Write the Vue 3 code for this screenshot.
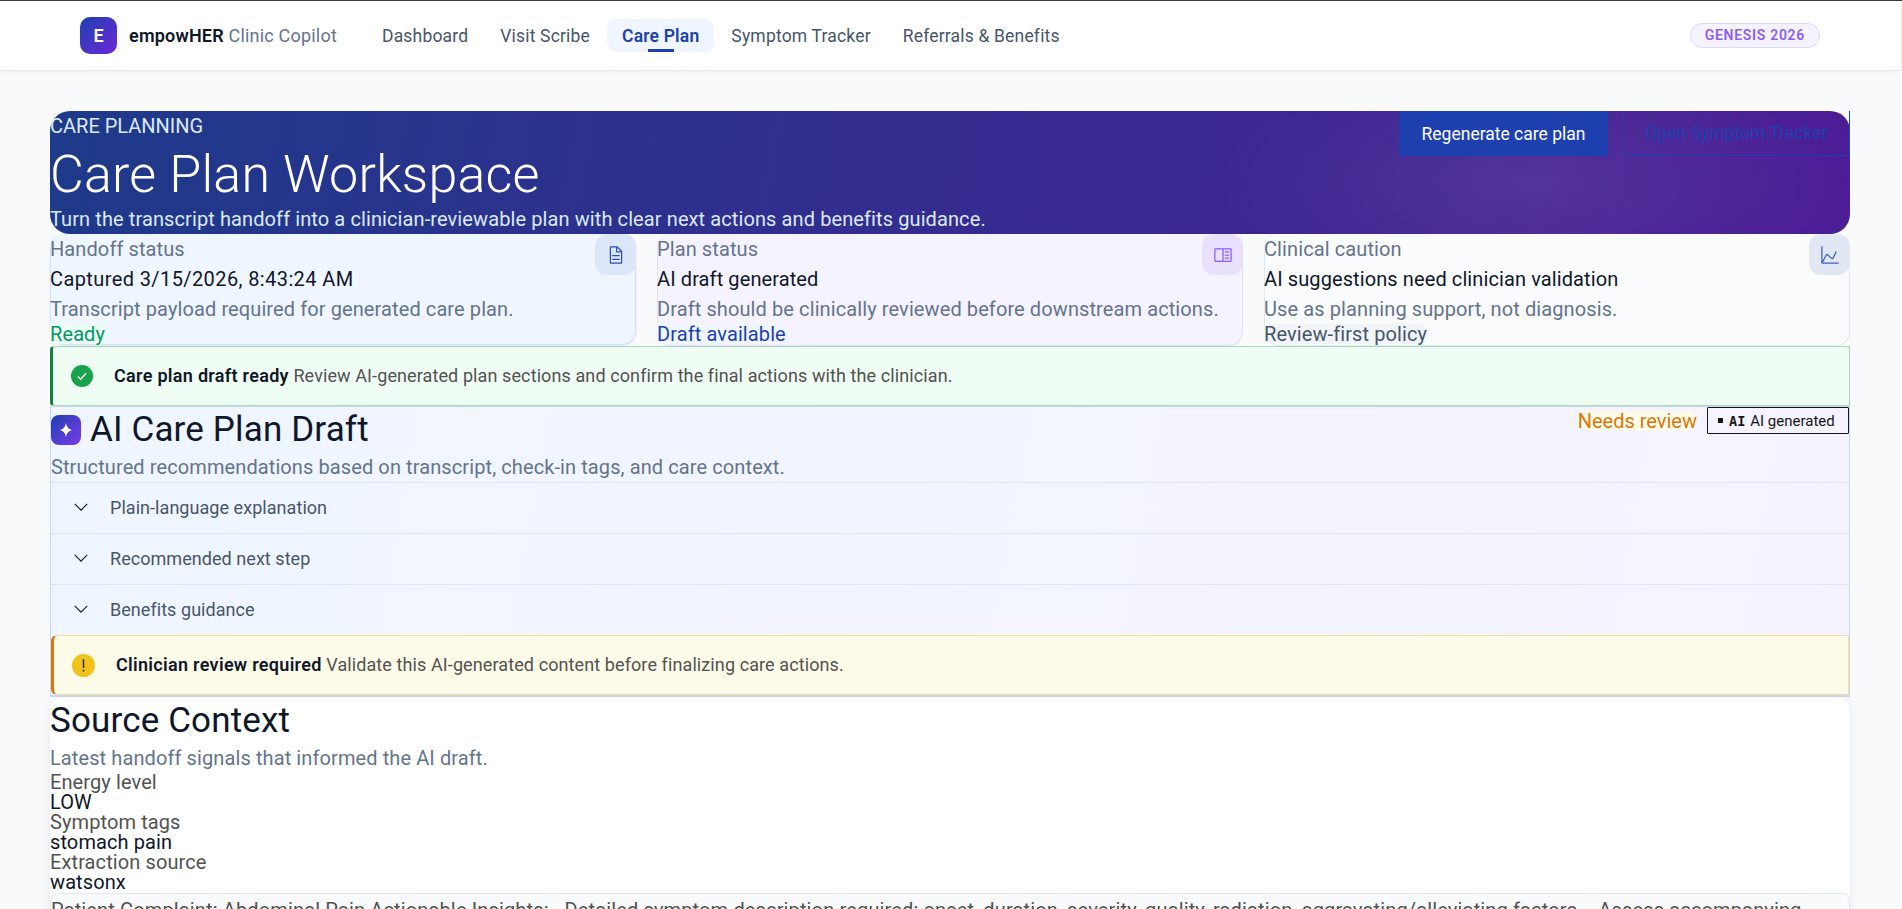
<script setup>
const navItems = [
  { label: 'Dashboard', active: false },
  { label: 'Visit Scribe', active: false },
  { label: 'Care Plan', active: true },
  { label: 'Symptom Tracker', active: false },
  { label: 'Referrals & Benefits', active: false },
]
const sections = ['Plain-language explanation', 'Recommended next step', 'Benefits guidance']
const signals = [
  { k: 'Energy level', v: 'LOW' },
  { k: 'Symptom tags', v: 'stomach pain' },
  { k: 'Extraction source', v: 'watsonx' },
]
</script>

<template>
  <div class="app">
    <header class="topbar">
      <div class="brand">
        <span class="logo">E</span>
        <span class="brand-text"><b>empowHER</b> <span>Clinic Copilot</span></span>
      </div>
      <nav class="nav">
        <a v-for="n in navItems" :key="n.label" class="nav-item" :class="{ active: n.active }">{{ n.label }}</a>
      </nav>
      <span class="genesis">GENESIS 2026</span>
    </header>

    <main class="main">
      <section class="hero">
        <div class="hero-copy">
          <div class="eyebrow">CARE PLANNING</div>
          <h1>Care Plan Workspace</h1>
          <p>Turn the transcript handoff into a clinician-reviewable plan with clear next actions and benefits guidance.</p>
        </div>
        <div class="hero-actions">
          <button class="btn-primary">Regenerate care plan</button>
          <button class="btn-ghost">Open Symptom Tracker</button>
        </div>
      </section>

      <section class="cards">
        <article class="card blue">
          <span class="tile tile-blue">
            <svg viewBox="0 0 32 32" width="20" height="20" fill="#2f4fb5"><path d="M25.7 9.3l-7-7C18.500 2.100 18.300 2 18 2H8C6.900 2 6 2.900 6 4v24c0 1.100.9 2 2 2h16c1.100 0 2-.9 2-2V10C26 9.700 25.900 9.500 25.700 9.300zM18 4.400l5.600 5.600H18V4.400zM24 28H8V4h8v6c0 1.100.9 2 2 2h6V28z"/><path d="M10 22h12v2H10zM10 16h12v2H10z"/></svg>
          </span>
          <div class="c-label">Handoff status</div>
          <div class="c-value wide">Captured 3/15/2026, 8:43:24 AM</div>
          <div class="c-note">Transcript payload required for generated care plan.</div>
          <div class="c-tag green">Ready</div>
        </article>
        <article class="card violet">
          <span class="tile tile-violet">
            <svg viewBox="0 0 32 32" width="20" height="20" fill="#8b5cf6"><path d="M19 10h7v2h-7zM19 15h7v2h-7zM19 20h7v2h-7z"/><path d="M28 5H4C2.897 5 2 5.897 2 7v18c0 1.103.897 2 2 2h24c1.103 0 2-.897 2-2V7c0-1.103-.897-2-2-2zM4 7h11v18H4zM17 25V7h11l.002 18z"/></svg>
          </span>
          <div class="c-label">Plan status</div>
          <div class="c-value">AI draft generated</div>
          <div class="c-note">Draft should be clinically reviewed before downstream actions.</div>
          <div class="c-tag navy">Draft available</div>
        </article>
        <article class="card gray">
          <span class="tile tile-gray">
            <svg viewBox="0 0 32 32" width="20" height="20" fill="#3f5fbf"><path d="M4.670 28l6.390-12 7.300 6.490a2 2 0 0 0 1.700.47 2 2 0 0 0 1.420-1.070L27 10.900l-1.820-.9L19.690 21l-7.300-6.490A2 2 0 0 0 10.710 14a2 2 0 0 0-1.420 1L4 25V2H2v26a2 2 0 0 0 2 2h26v-2z"/></svg>
          </span>
          <div class="c-label">Clinical caution</div>
          <div class="c-value">AI suggestions need clinician validation</div>
          <div class="c-note">Use as planning support, not diagnosis.</div>
          <div class="c-tag slate">Review-first policy</div>
        </article>
      </section>

      <section class="alert success">
        <span class="alert-icon">
          <svg viewBox="0 0 22 22" width="22" height="22"><circle cx="11" cy="11" r="11" fill="#16a34a"/><path d="M6.800 11.400l2.900 2.800 5.400-6" fill="none" stroke="#fff" stroke-width="1.400"/></svg>
        </span>
        <p><b>Care plan draft ready</b> Review AI-generated plan sections and confirm the final actions with the clinician.</p>
      </section>

      <section class="draft">
        <div class="draft-head">
          <div class="draft-title">
            <span class="spark">
              <svg viewBox="0 0 16 16" width="18" height="18"><path d="M8 1.500c.6 4 2.400 5.900 6 6.500-3.600.6-5.400 2.500-6 6.500C7.400 10.500 5.600 8.600 2 8c3.600-.6 5.400-2.500 6-6.500z" fill="#fff"/></svg>
            </span>
            <h2>AI Care Plan Draft</h2>
          </div>
          <div class="draft-badges">
            <span class="needs">Needs review</span>
            <span class="ai-tag"><i></i><b>AI</b><span>AI generated</span></span>
          </div>
        </div>
        <p class="draft-sub">Structured recommendations based on transcript, check-in tags, and care context.</p>
        <div v-for="s in sections" :key="s" class="acc-row">
          <svg viewBox="0 0 16 16" width="20" height="20" fill="none" stroke="#161616" stroke-width=".9"><path d="M3 5.500l5 5 5-5"/></svg>
          <span>{{ s }}</span>
        </div>
        <div class="alert warn">
          <span class="alert-icon">
            <svg viewBox="0 0 22 22" width="23" height="23"><circle cx="11" cy="11" r="11" fill="#f1c21b"/><path d="M11 5v8.500M11 15v1.800" stroke="#161616" stroke-width="1.300" fill="none"/></svg>
          </span>
          <p><b>Clinician review required</b> Validate this AI-generated content before finalizing care actions.</p>
        </div>
      </section>

      <section class="source">
        <h2>Source Context</h2>
        <p class="source-sub">Latest handoff signals that informed the AI draft.</p>
        <div class="signals">
          <div v-for="s in signals" :key="s.k" class="signal">
            <div class="s-k">{{ s.k }}</div>
            <div class="s-v">{{ s.v }}</div>
          </div>
        </div>
        <div class="transcript">Patient Complaint: Abdominal Pain Actionable Insights: - Detailed symptom description required: onset, duration, severity, quality, radiation, aggravating/alleviating factors. - Assess accompanying</div>
      </section>
    </main>
  </div>
</template>

<style>
html, body { overflow: hidden; background: #f8fafc; }
</style>

<style scoped>
.app { font-family: "Roboto", "Liberation Sans", sans-serif; color: #0f172a; background: #f8fafc; height: 909px; overflow: hidden; border-top: 1px solid #3a3a3a; box-sizing: border-box; }
.topbar { width: 1740px; height: 69px; background: #fff; border-bottom: 1px solid #e2e8f0; box-shadow: 0 1px 3px rgba(15,23,42,.05); display: flex; align-items: center; padding: 0 80px; box-sizing: content-box; }
.brand { display: flex; align-items: center; gap: 12px; width: 287px; flex: none; }
.logo { width: 37px; height: 37px; border-radius: 10px; background: linear-gradient(135deg, #1e40af, #6d28d9); color: #fff; font-weight: 600; font-size: 18px; display: flex; align-items: center; justify-content: center; }
.brand-text { font-size: 18px; letter-spacing: .2px; color: #64748b; white-space: nowrap; }
.brand-text b { color: #0f172a; font-weight: 600; }
.nav { display: flex; gap: 2px; flex: 1; }
.nav-item { position: relative; padding: 8px 15px 6px; line-height: 19px; font-size: 17.500px; letter-spacing: .18px; color: #475569; border-radius: 9px; white-space: nowrap; }
.nav-item.active { background: #eff6ff; color: #1e40af; font-weight: 600; }
.nav-item.active::after { content: ""; position: absolute; left: 50%; bottom: 0; width: 26px; height: 3px; margin-left: -13px; background: #1e40af; }
.genesis { font-size: 14px; font-weight: 600; letter-spacing: .7px; color: #8b5cf6; background: #f5f3ff; border: 1px solid #ddd6fe; border-radius: 13px; padding: 3px 14px; line-height: 17px; white-space: nowrap; }

.main { padding: 40px 52px 0 50px; }
.hero { height: 123px; border-radius: 20px; display: flex; justify-content: space-between; color: #fff; background: radial-gradient(ellipse 320px 130px at 82.500% 58%, rgba(255,255,255,.08), transparent), linear-gradient(100deg, #1e3a8a, #4c1d95); }
.eyebrow { font-size: 20px; line-height: 30px; color: #dbeafe; }
.hero h1 { margin: 1px 0 0; font-size: 52px; font-weight: 300; line-height: 65px; letter-spacing: .2px; white-space: nowrap; }
.hero p { margin: 0; font-size: 20px; line-height: 25px; letter-spacing: .1px; color: #dbeafe; white-space: nowrap; }
.hero-actions { display: flex; gap: 15px; align-items: flex-start; }
.btn-primary, .btn-ghost { height: 45px; font-family: inherit; font-size: 17.500px; padding: 0; border: 0; }
.btn-primary { background: #1e40af; color: #fff; width: 209px; }
.btn-ghost { background: transparent; color: #1e40af; border: 1px solid #1e40af; border-width: 0 1px 1px 1px; border-left-color: rgba(30,64,175,.4); width: 227px; box-sizing: border-box; }

.cards { display: grid; grid-template-columns: repeat(3, 1fr); gap: 21px; height: 112px; align-items: start; }
.card { position: relative; height: 112px; box-sizing: border-box; border: 1px solid #dbe4f5; border-top-width: 0; border-radius: 14px; font-size: 20px; letter-spacing: .1px; }
.card > div { margin-left: -1px; }
.blue { background: #eff6ff; border-color: #cfe0fc; box-shadow: 0 1px 3px rgba(15,23,42,.08); height: 111px; }
.violet { background: #f5f3ff; border-color: #e4defc; }
.gray { background: #fafbfd; border-color: #e2e8f0; }
.tile { position: absolute; top: 0; right: -1px; width: 41px; height: 41px; border-radius: 12px; display: flex; align-items: center; justify-content: center; }
.tile-blue { background: #dbe6f8; }
.tile-violet { background: #e8e0fd; }
.tile-gray { background: #e2e8f3; }
.c-label { color: #64748b; line-height: 30px; }
.c-value { color: #0f172a; line-height: 30px; }
.c-value.wide { letter-spacing: .4px; }
.c-note { color: #64748b; line-height: 30px; }
.c-tag { line-height: 20px; width: fit-content; }
.green { color: #059669; background: #ecfdf5; }
.navy { color: #1e40af; background: #eff6ff; }
.slate { color: #475569; background: #f1f5f9; border-radius: 8px; }

.alert { display: flex; align-items: center; gap: 21px; padding-left: 18px; border: 1px solid; border-left-width: 3px; box-sizing: border-box; font-size: 18px; letter-spacing: .1px; color: #525252; }
.alert p { margin: 0 0 1px; }
.alert b { color: #0f172a; font-weight: 600; letter-spacing: .3px; }
.alert-icon { display: flex; }
.success { height: 60px; background: #f0fdf4; border-color: #a7dcb6; border-left-color: #15803d; border-radius: 4px 0 0 4px; }
.warn { height: 60px; background: #fefbe8; border-color: #f4df9a; border-left-color: #d97706; border-radius: 6px 0 0 6px; }

.draft { background: linear-gradient(100deg, #eff6ff, #f5f3ff); border: 1px solid #c9d7fb; border-bottom-width: 2px; height: 291px; box-sizing: border-box; }
.draft-head { display: flex; justify-content: space-between; height: 45px; align-items: center; }
.draft-title { display: flex; align-items: center; gap: 9px; }
.spark { width: 30px; height: 30px; border-radius: 8px; background: linear-gradient(135deg, #1e40af, #7c3aed); display: flex; align-items: center; justify-content: center; }
.draft h2 { margin: 0; font-size: 35px; font-weight: 400; letter-spacing: .15px; color: #0f172a; white-space: nowrap; }
.draft-badges { display: flex; align-items: center; gap: 10px; align-self: flex-start; height: 27px; }
.needs { color: #d97706; font-size: 20px; line-height: 20px; background: #fffbeb; border-radius: 10px; }
.ai-tag { height: 27px; width: 142px; box-sizing: border-box; border: 1px solid #161616; font-size: 15px; display: flex; align-items: center; padding-left: 10px; border-radius: 1px; color: #161616; white-space: nowrap; }
.ai-tag i { width: 5px; height: 5px; background: #161616; margin-right: 6px; }
.ai-tag b { font-family: "DejaVu Sans Mono", monospace; font-weight: 700; font-size: 13.500px; margin-right: 5px; }
.draft-sub { margin: 0; font-size: 20px; line-height: 30px; letter-spacing: .1px; color: #64748b; }
.acc-row { height: 51px; padding-bottom: 2px; border-top: 1px solid #e0e6f5; display: flex; align-items: center; gap: 19px; padding-left: 20px; font-size: 18px; letter-spacing: .05px; color: #475569; box-sizing: border-box; }

.source { background: #fff; border-radius: 14px 14px 0 0; box-shadow: 0 2px 8px rgba(15,23,42,.08); height: 300px; }
.source h2 { margin: 0; font-size: 35px; font-weight: 400; line-height: 48px; letter-spacing: .15px; white-space: nowrap; }
.source-sub { margin: 0; font-size: 20px; line-height: 26px; letter-spacing: .1px; color: #64748b; }
.signals { margin-top: 1px; }
.signal { font-size: 20px; line-height: 20px; letter-spacing: .1px; }
.s-k { color: #525252; }
.s-v { color: #0f172a; }
.transcript { margin-top: 1px; background: #f8fafc; border: 1px solid #e2e8f0; border-radius: 8px; font-size: 20px; line-height: 32px; letter-spacing: .14px; color: #525252; white-space: nowrap; overflow: hidden; }
</style>
